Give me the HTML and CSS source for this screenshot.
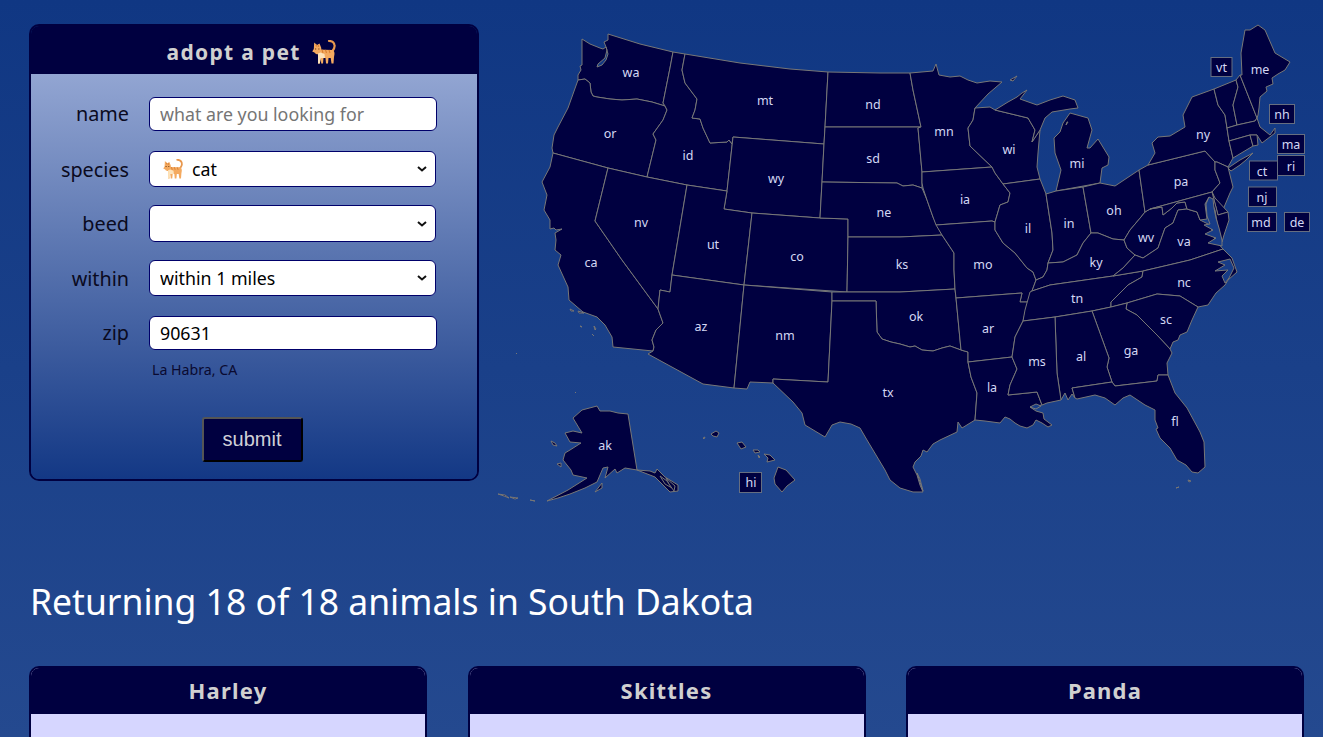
FILE: index.html
```html
<!DOCTYPE html>
<html lang="en">
<head>
<meta charset="utf-8">
<title>adopt a pet</title>
<link rel="stylesheet" href="styles.css">
</head>
<body>
<svg class="defs" width="0" height="0" aria-hidden="true">
  <symbol id="cat" viewBox="0 0 25 24">
    <path d="M20.500 11C22 9 23 7 22.500 5C22 2.500 19.500 1 17 1" fill="none" stroke="#e8984e" stroke-width="2.200" stroke-linecap="round"/>
    <path d="M6 9.500L20 10C22 10.500 22.500 12 22.500 14L22 17L21.500 23.500H19.500L18.700 18H16.500L16 23.500H14L13.500 18H11.500L11 23.500H9.200L8.800 18L7.800 23.500H6L6 16Z" fill="#f4aa60"/>
    <path d="M2.200 2.500L5 5L7.500 3.500L8.500 6C9.800 8 9.500 11 8.500 13C7 15 3.500 14.500 2.500 12.500L0.200 11.500L1.800 9Z" fill="#f4aa60"/>
    <path d="M6 13.500L8.500 12.500L12.500 14L13 18H8.800L7.800 23.500H6L6 17Z" fill="#fde3bb"/>
    <path d="M10 9.700L11 13M13.500 9.800L14.500 13M17 10L18 13M4 4.500L4.500 6.500M6.300 5L6.300 7" fill="none" stroke="#d97f32" stroke-width="1.100"/>
    <path d="M3 9H4.200M6.300 9H7.400" stroke="#6b3a12" stroke-width="1.200"/>
  </symbol>
</svg>
<main class="page">
  <section class="top">
    <form class="search">
      <h2 class="search-title">adopt a pet <svg class="cat-title" aria-hidden="true"><use href="#cat"/></svg></h2>
      <div class="search-body">
        <label class="field-label short" for="f-name">name</label>
        <input class="text-input" id="f-name" type="text" placeholder="what are you looking for">
        <label class="field-label" for="f-species">species</label>
        <div class="select-wrap">
          <select class="select-input species" id="f-species"><option>cat</option></select>
          <svg class="cat-select" aria-hidden="true"><use href="#cat"/></svg>
        </div>
        <label class="field-label" for="f-breed">beed</label>
        <select class="select-input tall" id="f-breed"><option></option></select>
        <label class="field-label" for="f-within">within</label>
        <select class="select-input" id="f-within"><option>within 1 miles</option></select>
        <label class="field-label short" for="f-zip">zip</label>
        <input class="text-input" id="f-zip" type="text" value="90631">
        <p class="place">La Habra, CA</p>
        <button class="submit" type="button">submit</button>
      </div>
    </form>
    <svg class="map" viewBox="490 24 833 486" role="img" aria-label="map of the United States">
      <g class="states">
        <path d="M608 34L640 44L673 52L670 68L663 103L665 106L652 102L637 99L622 100L610 99L597 97L593 96L591 92L590 83L585 79L578 80L578 75L581 70L580 66L582 65L582 50L582 39L590 44L600 48L603 49L606 47L607 50L605 58L598 64L597 67L602 65L606 60L608 54L606 47L604 42L608 40Z"/>
        <path d="M578 80L585 79L590 83L591 92L593 96L597 97L610 99L622 100L637 99L652 102L665 106L667 110L663 120L653 134L656 140L647 177L608 168L553 153L552 148L554 135L558 127L568 108Z"/>
        <path d="M553 153L608 168L595 221L622 260L658 309L663 323L656 330L652 340L654 347L653 351L613 347L612 337L605 325L597 317L583 312L569 300L568 287L558 265L561 255L555 250L556 240L555 233L562 229L556 230L554 228L550 229L550 220L544 210L547 195L542 182L550 167Z"/>
        <path d="M673 52L685 54L682 70L685 83L697 99L695 110L692 118L700 119L703 128L710 143L727 142L729 140L732 144L733 137L727 191L687 185L647 177L656 140L653 134L663 120L667 110L665 106L663 103L670 68Z"/>
        <path d="M608 168L647 177L687 185L672 275L670 292L660 290L658 309L622 260L595 221Z"/>
        <path d="M685 54L740 63L790 69L828 72L825 127L824 144L733 137L732 144L729 140L727 142L710 143L703 128L700 119L692 118L695 110L697 99L685 83L682 70Z"/>
        <path d="M733 137L824 144L822 182L820 218L752 213L724 209L727 191Z"/>
        <path d="M687 185L727 191L724 209L752 213L744 285L672 275Z"/>
        <path d="M672 275L744 285L734 388L703 384L648 354L653 351L654 347L652 340L656 330L663 323L658 309L660 290L670 292Z"/>
        <path d="M752 213L820 218L848 219L848 237L847 292L744 285Z"/>
        <path d="M744 285L832 292L832 301L828 382L773 379L773 383L750 382L747 389L734 388Z"/>
        <path d="M828 72L880 73L910 73L913 90L921 127L825 127Z"/>
        <path d="M825 127L921 127L918 128L922 172L922 183L922 188L913 185L903 186L897 183L822 182L824 144Z"/>
        <path d="M822 182L897 183L903 186L913 185L922 188L927 200L933 217L937 225L942 235L900 237L848 237L848 219L820 218Z"/>
        <path d="M848 237L900 237L942 235L950 247L954 253L954 270L955 289L900 292L847 292Z"/>
        <path d="M832 292L847 292L900 292L955 289L956 298L961 350L950 346L942 348L933 351L922 350L915 346L910 347L900 344L891 342L882 339L877 332L876 301L832 301Z"/>
        <path d="M832 301L876 301L877 332L882 339L891 342L900 344L910 347L915 346L922 350L933 351L942 348L950 346L961 350L968 352L968 362L971 377L977 393L975 420L962 428L958 422L957 432L940 440L933 444L927 452L923 450L921 456L915 462L913 467L917 475L920 485L923 492L913 492L900 488L890 480L885 470L867 440L860 428L851 424L840 422L832 425L825 437L805 425L802 413L793 402L773 383L773 379L828 382Z"/>
        <path d="M910 73L933 71L936 64L939 75L950 77L960 76L968 80L977 83L990 81L1002 82L988 94L975 108L973 120L968 128L970 146L992 167L922 172L918 128L921 127L913 90Z"/>
        <path d="M922 172L992 167L995 173L1003 184L1010 193L1008 202L1000 205L995 222L992 221L936 225L933 217L927 200L923 188L922 183Z"/>
        <path d="M936 225L992 221L995 222L995 230L1003 243L1015 253L1027 268L1033 272L1036 280L1032 291L1028 302L1020 302L1022 293L956 298L955 289L954 270L954 253L950 247L942 235Z"/>
        <path d="M956 298L1022 293L1020 302L1028 302L1023 321L1015 337L1012 357L968 362L968 352L961 350Z"/>
        <path d="M968 362L1012 357L1017 369L1010 385L1008 395L1037 392L1042 405L1036 406L1030 407L1036 411L1043 413L1044 419L1052 425L1048 427L1042 423L1036 420L1033 425L1027 428L1020 426L1015 423L1010 419L1005 417L1000 423L985 421L975 420L977 393L971 377Z"/>
        <path d="M975 108L990 107L995 110L1028 118L1035 130L1032 142L1040 130L1038 153L1037 167L1040 179L1003 184L995 173L992 167L970 146L968 128L973 120Z"/>
        <path d="M995 110L1008 102L1017 97L1022 93L1027 90L1020 99L1037 105L1050 100L1063 96L1075 100L1078 108L1070 109L1052 112L1045 118L1040 130L1032 142L1035 130L1028 118Z"/>
        <path d="M1070 113L1088 118L1092 130L1087 148L1090 148L1098 139L1109 157L1108 165L1102 168L1100 183L1056 191L1061 170L1055 153L1054 138L1060 132L1063 123Z"/>
        <path d="M1003 184L1040 179L1046 194L1052 233L1053 250L1048 263L1047 270L1043 277L1036 280L1033 272L1027 268L1015 253L1003 243L995 230L995 222L1000 205L1008 202L1010 193Z"/>
        <path d="M1046 194L1056 191L1083 187L1091 233L1083 243L1077 255L1063 262L1048 263L1053 250L1052 233Z"/>
        <path d="M1083 187L1100 183L1115 186L1139 170L1145 212L1141 217L1130 230L1124 240L1113 239L1098 233L1091 233Z"/>
        <path d="M1091 233L1098 233L1113 239L1124 240L1127 248L1135 255L1123 268L1113 276L1050 285L1032 291L1036 280L1043 277L1047 270L1048 263L1063 262L1077 255L1083 243Z"/>
        <path d="M1032 291L1050 285L1113 276L1143 271L1142 277L1128 285L1118 295L1111 302L1111 307L1092 311L1055 317L1023 321L1025 310L1030 292Z"/>
        <path d="M1145 212L1150 209L1162 207L1163 215L1172 208L1177 203L1185 202L1187 209L1178 210L1173 223L1165 228L1158 248L1143 258L1135 255L1127 248L1124 240L1130 230L1141 217Z"/>
        <path d="M1135 255L1143 258L1158 248L1165 228L1173 223L1178 210L1187 209L1197 212L1200 220L1210 225L1215 240L1223 249L1190 260L1143 271L1113 276L1123 268Z"/>
        <path d="M1143 271L1190 260L1223 249L1232 258L1237 272L1228 280L1225 285L1216 293L1208 305L1198 307L1180 296L1157 294L1127 303L1111 307L1111 302L1118 295L1128 285L1142 277Z"/>
        <path d="M1127 303L1157 294L1180 296L1198 307L1192 320L1187 332L1180 335L1178 340L1173 342L1170 349L1157 335L1137 315L1126 309Z"/>
        <path d="M1092 311L1111 307L1127 303L1126 309L1137 315L1157 335L1170 349L1172 353L1167 363L1168 375L1158 375L1157 381L1115 386L1112 382L1107 367L1109 358Z"/>
        <path d="M1055 317L1092 311L1109 358L1107 367L1112 382L1072 388L1075 398L1072 394L1068 400L1065 393L1061 400L1057 373Z"/>
        <path d="M1023 321L1055 317L1057 373L1061 400L1047 403L1042 405L1037 392L1008 395L1010 385L1017 369L1012 357L1015 337Z"/>
        <path d="M1072 388L1112 382L1115 386L1157 381L1158 375L1168 375L1175 393L1187 408L1200 432L1204 442L1205 467L1198 473L1192 472L1186 465L1177 460L1170 448L1160 438L1156 429L1158 428L1155 420L1155 410L1145 405L1130 395L1123 398L1115 405L1105 398L1095 395L1077 399L1075 398Z"/>
        <path d="M1139 170L1148 165L1205 151L1215 162L1215 170L1220 183L1212 192L1150 209L1145 212Z"/>
        <path d="M1148 165L1155 153L1152 143L1158 137L1170 136L1185 127L1183 115L1192 97L1214 89L1218 105L1225 115L1227 128L1229 141L1233 158L1228 167L1217 162L1215 162L1205 151Z"/>
        <path d="M1228 168L1240 160L1253 153L1246 160L1240 165L1231 171Z"/>
        <path d="M1214 89L1236 80L1238 87L1233 105L1237 125L1227 128L1225 115L1218 105Z"/>
        <path d="M1236 80L1240 75L1257 118L1255 121L1237 125L1233 105L1238 87Z"/>
        <path d="M1240 75L1242 75L1241 53L1245 30L1250 30L1258 25L1265 30L1275 53L1290 62L1285 70L1278 74L1272 78L1273 84L1266 87L1267 91L1260 97L1259 108L1258 115L1257 118Z"/>
        <path d="M1227 128L1237 125L1255 121L1257 118L1260 127L1270 135L1275 128L1275 133L1262 143L1257 135L1250 135L1229 141Z"/>
        <path d="M1229 141L1250 135L1253 146L1233 158Z"/>
        <path d="M1250 135L1257 135L1258 145L1253 146Z"/>
        <path d="M1215 162L1217 162L1228 167L1233 187L1230 193L1222 212L1216 202L1212 192L1220 183L1215 170Z"/>
        <path d="M1212 192L1215 198L1228 212L1218 215Z"/>
        <path d="M1150 209L1212 192L1218 215L1228 212L1229 220L1224 235L1222 242L1218 228L1215 210L1209 197L1205 204L1207 219L1200 220L1197 212L1187 209L1185 202L1177 203L1172 208L1163 215L1162 207Z"/>
        <path class="water" d="M1209 197L1206 204L1207 216L1210 224L1204 225L1213 230L1205 234L1216 238L1208 243L1222 246L1222 240L1219 228L1216 218L1214 208L1213 199Z"/>
        <path class="water" d="M1218 262L1230 259L1234 268L1229 278L1225 283L1222 276L1228 270L1215 271L1225 265Z"/>
        <path class="water" d="M1030 407L1036 404L1041 406L1036 409Z"/>
        <path d="M1010 80L1017 76L1013 81Z"/>
        <path d="M1068 122L1066 125L1067 122Z"/>
        <path d="M1188 480L1191 481L1189 482Z"/>
        <path d="M1176 488L1179 487Z"/>
        <path d="M570 309L574 311L571 311Z"/>
        <path d="M578 311L584 313L579 313Z"/>
        <path d="M580 326L582 327Z"/>
        <path d="M594 326L596 329L595 330Z"/>
        <path d="M592 334L594 336Z"/>
        <path d="M917 473L923 491L920 479Z"/>
      </g>
      <g class="states">
        <path d="M597 406L600 411L610 411L618 413L628 414L637 470L650 471L655 473L657 469L665 477L678 485L678 491L670 492L662 484L655 477L637 470L625 468L617 473L615 469L605 478L608 467L603 468L597 482L585 488L570 494L558 498L547 501L568 490L587 478L573 475L571 470L563 460L565 453L570 450L581 443L570 442L565 433L573 431L582 433L573 418L582 410Z"/>
        <path d="M595 492L602 483L602 488Z"/>
        <path d="M551 441L555 443L557 446L553 445Z"/>
        <path d="M557 464L561 463L561 467Z"/>
        <path d="M660 476L667 481L672 488L665 484Z"/>
        <path d="M666 478L675 486L674 491L669 484Z"/>
        <path d="M778 467L786 470L795 480L787 486L782 492L775 484L774 478Z"/>
        <path d="M764 454L770 455L775 460L767 462L768 458Z"/>
        <path d="M737 443L742 442L746 447L741 449Z"/>
        <path d="M711 434L716 431L719 433L717 437L713 436Z"/>
        <path d="M753 450L758 450L760 452L755 453Z"/>
        <path d="M703 438L705 437L704 439Z"/>
        <path d="M758 455L760 457L759 458Z"/>
        <path d="M498 494L505 495L509 498L504 496Z"/>
        <path d="M510 497L518 498L515 499Z"/>
        <path d="M530 500L535 501Z"/>
        <path d="M516 353L517 354Z"/>
        <path d="M575 392L576 393Z"/>
      </g>
      <g class="labels">
        <text x="631" y="72">wa</text>
        <text x="610" y="133">or</text>
        <text x="591" y="262">ca</text>
        <text x="688" y="155">id</text>
        <text x="641" y="222">nv</text>
        <text x="765" y="100">mt</text>
        <text x="776" y="178">wy</text>
        <text x="713" y="244">ut</text>
        <text x="701" y="326">az</text>
        <text x="797" y="256">co</text>
        <text x="785" y="335">nm</text>
        <text x="873" y="104">nd</text>
        <text x="873" y="158">sd</text>
        <text x="884" y="212">ne</text>
        <text x="902" y="264">ks</text>
        <text x="916" y="316">ok</text>
        <text x="888" y="392">tx</text>
        <text x="944" y="131">mn</text>
        <text x="965" y="199">ia</text>
        <text x="983" y="264">mo</text>
        <text x="988" y="328">ar</text>
        <text x="992" y="387">la</text>
        <text x="1009" y="149">wi</text>
        <text x="1028" y="228">il</text>
        <text x="1037" y="361">ms</text>
        <text x="1069" y="223">in</text>
        <text x="1077" y="163">mi</text>
        <text x="1096" y="262">ky</text>
        <text x="1077" y="298">tn</text>
        <text x="1081" y="356">al</text>
        <text x="1131" y="350">ga</text>
        <text x="1175" y="421">fl</text>
        <text x="1114" y="210">oh</text>
        <text x="1146" y="237">wv</text>
        <text x="1184" y="241">va</text>
        <text x="1184" y="282">nc</text>
        <text x="1166" y="319">sc</text>
        <text x="1181" y="181">pa</text>
        <text x="1203" y="134">ny</text>
        <text x="1260" y="69">me</text>
        <text x="605" y="445">ak</text>
      </g>
      <g class="tags">
        <rect x="1211" y="57.500" width="21" height="19"/><text x="1221.500" y="67">vt</text>
        <rect x="1269.500" y="104.500" width="25" height="19"/><text x="1282" y="114">nh</text>
        <rect x="1277.500" y="134.500" width="27" height="19"/><text x="1291" y="144">ma</text>
        <rect x="1277.500" y="155.500" width="27" height="20"/><text x="1291" y="166">ri</text>
        <rect x="1249.500" y="161" width="28" height="19"/><text x="1262" y="171">ct</text>
        <rect x="1248.500" y="187" width="28" height="19.500"/><text x="1262" y="197">nj</text>
        <rect x="1247.500" y="212.500" width="29" height="19"/><text x="1261" y="222">md</text>
        <rect x="1284.500" y="212.500" width="25" height="19"/><text x="1297" y="222">de</text>
        <rect x="739.500" y="472.500" width="22" height="20"/><text x="751" y="482">hi</text>
      </g>
    </svg>
  </section>
  <h1 class="result-title">Returning 18 of 18 animals in South Dakota</h1>
  <section class="cards">
    <article class="card"><h3 class="card-title">Harley</h3><div class="card-body"></div></article>
    <article class="card"><h3 class="card-title">Skittles</h3><div class="card-body"></div></article>
    <article class="card"><h3 class="card-title">Panda</h3><div class="card-body"></div></article>
  </section>
</main>
</body>
</html>
```
FILE: styles.css
```css
* { box-sizing: border-box; }
html, body { margin: 0; height: 737px; overflow: hidden; }
body {
  background: linear-gradient(#103783, #24498f);
  font-family: "Noto Sans", sans-serif;
}
.defs { position: absolute; }
.page { padding: 24px 0 0 29px; }
.top { display: flex; align-items: flex-start; gap: 11px; }
.search {
  flex: none;
  width: 450px;
  height: 457px;
  border: 2px solid #000040;
  border-radius: 10px;
  overflow: hidden;
  display: flex;
  flex-direction: column;
}
.search-title {
  margin: 0;
  height: 48px;
  padding-right: 4px;
  background: #000040;
  color: #d0d0d0;
  font-size: 21px;
  line-height: 52px;
  font-weight: 700;
  letter-spacing: 1.300px;
  text-align: center;
}
.cat-title {
  width: 25px;
  height: 24px;
  margin-left: 5px;
  vertical-align: -4px;
}
.search-body {
  flex: 1;
  background: linear-gradient(#92a5d2, #133885);
  padding: 23px 0 0 0;
  display: grid;
  grid-template-columns: 98px 288px;
  grid-template-rows: 54px 54px 55px 56px 54px auto auto;
  column-gap: 20px;
}
.field-label {
  font-size: 19.800px;
  line-height: 37px;
  height: 36px;
  color: #0a0a20;
  text-align: right;
}
.field-label.short { line-height: 34px; height: 34px; }
.text-input, .select-input {
  font-family: inherit;
  font-size: 17.800px;
  color: #000;
  background-color: #fff;
  border: 1px solid #00006a;
  border-radius: 6px;
}
.text-input { height: 34px; padding: 0 10px; }
.text-input::placeholder { color: #757575; }
.select-input {
  display: block;
  width: 287px;
  height: 36px;
  padding: 0 24px 0 10px;
  appearance: none;
  background-image: url("data:image/svg+xml,%3Csvg xmlns='http://www.w3.org/2000/svg' width='10' height='6'%3E%3Cpath d='M1 1l4 3.500L9 1' fill='none' stroke='%23111' stroke-width='2'/%3E%3C/svg%3E");
  background-repeat: no-repeat;
  background-position: right 8px center;
}
.select-input.tall { height: 37px; }
.select-wrap { position: relative; height: 36px; }
.select-input.species { padding-left: 42px; }
.cat-select {
  position: absolute;
  left: 14px;
  top: 8px;
  width: 21px;
  height: 20px;
  pointer-events: none;
}
.place {
  grid-column: 2;
  margin: -10px 0 0 3px;
  font-size: 14.200px;
  line-height: 20px;
  color: #0a0a30;
}
.submit {
  grid-column: 1 / -1;
  justify-self: center;
  width: 101px;
  height: 45px;
  margin: 20px 0 0 36px;
  background: #000040;
  color: #d0d0d8;
  font: 20px "Liberation Sans", Arial, sans-serif;
  border: 2px outset #555;
  border-radius: 3px;
}
.map { flex: none; width: 833px; height: 486px; }
.states path { fill: #000040; stroke: #777; stroke-width: 1; stroke-linejoin: round; }
.states .water { fill: #173c87; }
.labels text, .tags text {
  fill: #d4d8f4;
  font-size: 12.500px;
  text-anchor: middle;
  dominant-baseline: central;
}
.tags rect { fill: #000040; stroke: #666e80; stroke-width: 1; }
.result-title {
  margin: 66px 0 40px 1px;
  color: #fff;
  font-size: 35.500px;
  line-height: 50px;
  font-weight: 400;
}
.cards {
  width: 1275px;
  display: grid;
  grid-template-columns: repeat(3, 1fr);
  column-gap: 40.500px;
}
.card {
  border: 2px solid #000040;
  border-radius: 10px;
  overflow: hidden;
  height: 300px;
  background: #d6d6ff;
}
.card-title {
  margin: 0;
  height: 46px;
  background: #000040;
  color: #d0d0d0;
  font-size: 22px;
  line-height: 44px;
  font-weight: 700;
  letter-spacing: 1.200px;
  text-align: center;
}
```
